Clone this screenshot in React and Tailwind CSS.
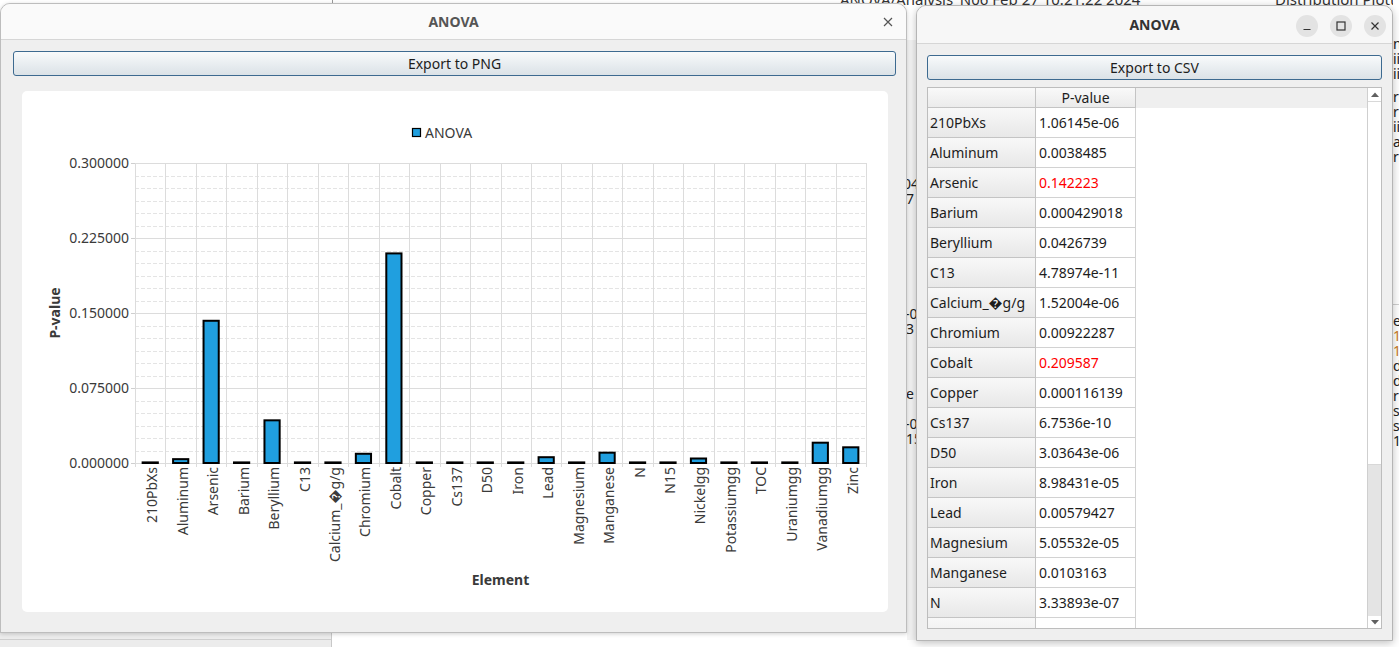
import React from "react";

const CATS = [
  ["210PbXs", 1.06145e-6],
  ["Aluminum", 0.0038485],
  ["Arsenic", 0.142223],
  ["Barium", 0.000429018],
  ["Beryllium", 0.0426739],
  ["C13", 4.78974e-11],
  ["Calcium_\uFFFDg/g", 1.52004e-6],
  ["Chromium", 0.00922287],
  ["Cobalt", 0.209587],
  ["Copper", 0.000116139],
  ["Cs137", 6.7536e-10],
  ["D50", 3.03643e-6],
  ["Iron", 8.98431e-5],
  ["Lead", 0.00579427],
  ["Magnesium", 5.05532e-5],
  ["Manganese", 0.0103163],
  ["N", 3.33893e-7],
  ["N15", 3.34213e-11],
  ["Nickelgg", 0.0045],
  ["Potassiumgg", 2.1e-6],
  ["TOC", 1.2e-8],
  ["Uraniumgg", 3.1e-6],
  ["Vanadiumgg", 0.0203],
  ["Zinc", 0.0157],
];

const ROWS = [
  ["210PbXs", "1.06145e-06"],
  ["Aluminum", "0.0038485"],
  ["Arsenic", "0.142223", true],
  ["Barium", "0.000429018"],
  ["Beryllium", "0.0426739"],
  ["C13", "4.78974e-11"],
  ["Calcium_\uFFFDg/g", "1.52004e-06"],
  ["Chromium", "0.00922287"],
  ["Cobalt", "0.209587", true],
  ["Copper", "0.000116139"],
  ["Cs137", "6.7536e-10"],
  ["D50", "3.03643e-06"],
  ["Iron", "8.98431e-05"],
  ["Lead", "0.00579427"],
  ["Magnesium", "5.05532e-05"],
  ["Manganese", "0.0103163"],
  ["N", "3.33893e-07"],
  ["N15", "3.34213e-11"],
];

function Chart() {
  const X0 = 113, X1 = 844, Y0 = 72, Y1 = 372;
  const cw = (X1 - X0) / 24;
  const minor = [];
  for (let k = 0; k <= 24; k++) {
    const y = Math.round(Y0 + k * 12.5) + 0.5;
    if (k % 6 === 0) {
      minor.push(<line key={"h" + k} x1={X0} x2={X1} y1={y} y2={y} stroke="#dcdcdc" strokeWidth="1" />);
      minor.push(<line key={"t" + k} x1={X0 - 4} x2={X0} y1={y} y2={y} stroke="#cfcfcf" strokeWidth="1" />);
    } else {
      minor.push(<line key={"h" + k} x1={X0} x2={X1} y1={y} y2={y} stroke="#e4e4e4" strokeWidth="1" strokeDasharray="4 2" />);
    }
  }
  const vert = [];
  for (let i = 0; i <= 24; i++) {
    const x = Math.round(X0 + i * cw) + 0.5;
    vert.push(<line key={"v" + i} x1={x} x2={x} y1={Y0} y2={Y1 + 4} stroke="#dcdcdc" strokeWidth="1" />);
  }
  const yLabels = ["0.300000", "0.225000", "0.150000", "0.075000", "0.000000"];
  return (
    <svg width="865" height="521" viewBox="0 0 865 521" className="block" style={{ fontFamily: '"Noto Sans", "DejaVu Sans", sans-serif' }}>
      <g shapeRendering="crispEdges">
        {minor}
        {vert}
      </g>
      {CATS.map(([name, v], i) => {
        const cx = X0 + (i + 0.5) * cw;
        const h = Math.max(v * 1000, 0.6);
        return (
          <rect key={name} x={cx - 7.6} y={Y1 - h} width={15.2} height={h} fill="#209fdf" stroke="#000" strokeWidth="2" />
        );
      })}
      {yLabels.map((t, k) => (
        <text key={t} x={107} y={Y0 + k * 75 + 5} textAnchor="end" fontSize="14" fill="#3a3a3a">{t}</text>
      ))}
      {CATS.map(([name], i) => {
        const cx = X0 + (i + 0.5) * cw;
        return (
          <text key={name} transform={`translate(${cx + 7} ${Y1 + 4}) rotate(-90)`} textAnchor="end" fontSize="14" fill="#3a3a3a">{name}</text>
        );
      })}
      <text transform="translate(37.5 222) rotate(-90)" textAnchor="middle" fontSize="14" fontWeight="700" fill="#3a3a3a">P-value</text>
      <text x={478.5} y={494} textAnchor="middle" fontSize="14" fontWeight="700" fill="#3a3a3a">Element</text>
      <rect x={390.5} y={37.5} width={8} height={8} fill="#209fdf" stroke="#000" strokeWidth="1.2" />
      <text x={403} y={46.5} fontSize="14" fill="#3a3a3a">ANOVA</text>
    </svg>
  );
}

function Button({ children }) {
  return (
    <div className="h-[25px] rounded-[3px] border border-[#3d6a90] bg-gradient-to-b from-[#f8fafb] to-[#dbe2e7] flex items-center justify-center text-[14px] text-[#1d1d1d]">
      {children}
    </div>
  );
}

function Table() {
  return (
    <div className="h-[542px] border border-[#bdbdbd] bg-white flex overflow-hidden">
      <div className="flex-1 flex flex-col overflow-hidden">
        <div className="h-[20px] flex shrink-0 bg-[#efefef]">
          <div className="w-[108px] border-r border-b border-[#c4c4c4] bg-gradient-to-b from-[#f9f9f9] to-[#ebebeb]" />
          <div className="w-[100px] border-r border-b border-[#c4c4c4] bg-gradient-to-b from-[#f9f9f9] to-[#ebebeb] flex items-center justify-center text-[14px] text-[#1d1d1d] leading-none">
            P-value
          </div>
          <div className="flex-1" />
        </div>
        {ROWS.map(([name, val, red]) => (
          <div key={name} className="h-[30px] flex shrink-0">
            <div className="w-[108px] border-r border-b border-[#c4c4c4] bg-gradient-to-b from-[#f8f8f8] to-[#e8e8e8] flex items-center pl-[2px] text-[14px] text-[#1d1d1d] whitespace-nowrap overflow-hidden">
              {name}
            </div>
            <div className={"w-[100px] border-r border-b border-[#d2d2d2] flex items-center pl-[3px] text-[14px] whitespace-nowrap " + (red ? "text-[#ff0000]" : "text-[#1d1d1d]")}>
              {val}
            </div>
            <div className="flex-1" />
          </div>
        ))}
      </div>
      <div className="w-[14px] border-l border-[#cfcfcf] flex flex-col shrink-0">
        <div className="h-[13px] flex items-center justify-center bg-white">
          <svg width="8" height="5" viewBox="0 0 8 5"><path d="M0 5 L4 0.5 L8 5 Z" fill="#606060" /></svg>
        </div>
        <div className="h-[364px] bg-white border-y border-[#d8d8d8]" />
        <div className="flex-1 bg-[#e4e4e4]" />
        <div className="h-[12px] flex items-center justify-center bg-white">
          <svg width="8" height="5" viewBox="0 0 8 5"><path d="M0 0 L4 4.5 L8 0 Z" fill="#606060" /></svg>
        </div>
      </div>
    </div>
  );
}

export default function App() {
  return (
    <div className="relative w-[1399px] h-[647px] overflow-hidden bg-white font-['Noto_Sans','DejaVu_Sans',sans-serif]">
      {/* background application remnants */}
      <div className="absolute left-[840px] top-[-12px] text-[15px] text-[#333] whitespace-nowrap">ANOVA/Analysis_N06 Feb 27 10:21:22 2024</div>
      <div className="absolute left-[1275px] top-[-12px] text-[15px] text-[#333] whitespace-nowrap">Distribution Plotting</div>
      <div className="absolute left-[332px] top-0 w-[1px] h-[4px] bg-[#9a9a9a]" />
      <div className="absolute left-0 top-[632px] w-[332px] h-[15px] bg-[#ececec] border-t border-r border-[#c8c8c8]">
        <div className="mt-[6px] h-[1px] bg-[#cfcfcf]" />
      </div>
      <div className="absolute left-[907px] top-[40px] w-[9px] h-[600px] bg-[#f4f4f4] text-[14px] text-[#222] leading-[15px] overflow-hidden">
        <div className="mt-[136px] -ml-[4px]">04</div>
        <div className="-ml-[1px]">7</div>
        <div className="mt-[100px] -ml-[2px]">-0</div>
        <div className="-ml-[1px]">3</div>
        <div className="mt-[50px] -ml-[1px]">e</div>
        <div className="mt-[15px] -ml-[2px]">-0</div>
        <div className="-ml-[1px]">15</div>
      </div>
      <div className="absolute left-[1393px] top-[0px] w-[6px] h-[647px] bg-white text-[14px] text-[#222] leading-[15px] overflow-hidden">
        <div className="mt-[36px]">ni</div>
        <div>ii</div>
        <div>ii</div>
        <div className="mt-[8px]">rr</div>
        <div>rr</div>
        <div>ii</div>
        <div>aa</div>
        <div>rr</div>
        <div className="mt-[140px] border-t border-[#cfcfcf] pt-[8px]">e</div>
        <div className="text-[#c97a1e]">1</div>
        <div className="text-[#c97a1e]">1</div>
        <div>d</div>
        <div>d</div>
        <div>ri</div>
        <div>s</div>
        <div>sc</div>
        <div>1</div>
      </div>

      {/* Left window: chart */}
      <div className="absolute left-0 top-[3px] w-[907px] h-[630px] rounded-t-[10px] border border-[#bdbdbd] bg-[#efefef] flex flex-col overflow-hidden shadow-[0_1px_4px_rgba(0,0,0,0.18)]">
        <div className="h-[36px] shrink-0 bg-[#fafafa] border-b border-[#d6d6d6] relative flex items-center justify-center">
          <span className="text-[14px] font-bold text-[#555]">ANOVA</span>
          <svg className="absolute right-[13px] top-[13px]" width="10" height="10" viewBox="0 0 10 10">
            <path d="M1 1 L9 9 M9 1 L1 9" stroke="#555" strokeWidth="1.2" />
          </svg>
        </div>
        <div className="flex-1 flex flex-col pt-[11px] pl-[12px] pr-[10px] pb-[20px]">
          <Button>Export to PNG</Button>
          <div className="mt-[15px] ml-[9px] mr-[8px] h-[521px] rounded-[5px] bg-white overflow-hidden">
            <Chart />
          </div>
        </div>
      </div>

      {/* Right window: table */}
      <div className="absolute left-[916px] top-[5px] w-[477px] h-[636px] rounded-t-[10px] border border-[#b5b5b5] bg-[#efefef] flex flex-col overflow-hidden shadow-[0_2px_8px_rgba(0,0,0,0.25)]">
        <div className="h-[38px] shrink-0 bg-[#f7f7f7] border-b border-[#d6d6d6] relative flex items-center justify-center">
          <span className="text-[14px] font-bold text-[#333]">ANOVA</span>
          <div className="absolute right-[74px] top-[9px] w-[22px] h-[22px] rounded-full bg-[#e3e3e3] flex items-center justify-center">
            <svg width="10" height="10" viewBox="0 0 10 10"><path d="M1.5 8.5 H8.5" stroke="#333" strokeWidth="1.2" /></svg>
          </div>
          <div className="absolute right-[40px] top-[9px] w-[22px] h-[22px] rounded-full bg-[#e3e3e3] flex items-center justify-center">
            <svg width="10" height="10" viewBox="0 0 10 10"><rect x="1" y="1" width="8" height="8" fill="none" stroke="#333" strokeWidth="1.2" /></svg>
          </div>
          <div className="absolute right-[6px] top-[9px] w-[22px] h-[22px] rounded-full bg-[#e3e3e3] flex items-center justify-center">
            <svg width="10" height="10" viewBox="0 0 10 10"><path d="M1.5 1.5 L8.5 8.5 M8.5 1.5 L1.5 8.5" stroke="#333" strokeWidth="1.2" /></svg>
          </div>
        </div>
        <div className="flex-1 flex flex-col pt-[11px] px-[10px] pb-[10px]">
          <Button>Export to CSV</Button>
          <div className="mt-[7px]">
            <Table />
          </div>
        </div>
      </div>
    </div>
  );
}
